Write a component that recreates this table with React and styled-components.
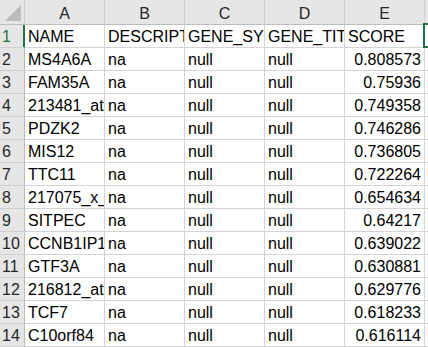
import React from "react";
import styled, { createGlobalStyle } from "styled-components";

const Global = createGlobalStyle`
  html, body { margin: 0; padding: 0; background: #fff; overflow: hidden; }
  body { font-family: "Liberation Sans", Arial, sans-serif; }
`;

const Sheet = styled.div`
  display: grid;
  grid-template-columns: 25px repeat(5, 80px) 1fr;
  grid-auto-rows: 23px;
  grid-template-rows: 25px;
  width: 428px;
  height: 347px;
  overflow: hidden;
  font-family: "Liberation Sans", Arial, sans-serif;
  font-size: 16px;
  line-height: 16px;
`;

const Corner = styled.div`
  background: #e6e6e6;
  border-right: 1px solid #cfcfcf;
  border-bottom: 1px solid #bdbdbd;
  box-sizing: border-box;
  display: flex;
  align-items: flex-end;
  justify-content: flex-end;
  padding: 0 3px 3px 0;
`;

const ColHead = styled.div`
  background: #e6e6e6;
  border-right: 1px solid #cfcfcf;
  border-bottom: 1px solid ${(p) => (p.$active ? "#217346" : "#bdbdbd")};
  box-sizing: border-box;
  display: flex;
  align-items: flex-end;
  justify-content: center;
  padding-bottom: 2px;
  color: #262626;
  font-size: 16px;
`;

const RowHead = styled.div`
  background: #e6e6e6;
  border-right: 1px solid ${(p) => (p.$active ? "#217346" : "#bdbdbd")};
  box-shadow: ${(p) => (p.$active ? "inset -1px 0 0 #217346" : "none")};
  border-bottom: 1px solid #cfcfcf;
  box-sizing: border-box;
  display: flex;
  align-items: flex-end;
  padding: 0 0 2px 2px;
  color: ${(p) => (p.$active ? "#217346" : "#262626")};
  font-size: 16px;
`;

const Cell = styled.div`
  position: relative;
  border-right: 1px solid #d4d4d4;
  border-bottom: 1px solid #d4d4d4;
  box-sizing: border-box;
  display: flex;
  align-items: flex-end;
  justify-content: ${(p) => (p.$num ? "flex-end" : "flex-start")};
  padding: 0 3px 2px 3px;
  color: #000;
  white-space: nowrap;
  overflow: ${(p) => (p.$selected ? "visible" : "hidden")};
`;

const Selection = styled.div`
  position: absolute;
  left: -2px;
  top: -2px;
  width: 40px;
  height: 25px;
  border: 2px solid #217346;
  box-sizing: border-box;
`;

const cols = ["A", "B", "C", "D", "E"];

const rows = [
  ["NAME", "DESCRIPTION", "GENE_SYMBOL", "GENE_TITLE", "SCORE"],
  ["MS4A6A", "na", "null", "null", "0.808573"],
  ["FAM35A", "na", "null", "null", "0.75936"],
  ["213481_at", "na", "null", "null", "0.749358"],
  ["PDZK2", "na", "null", "null", "0.746286"],
  ["MIS12", "na", "null", "null", "0.736805"],
  ["TTC11", "na", "null", "null", "0.722264"],
  ["217075_x_at", "na", "null", "null", "0.654634"],
  ["SITPEC", "na", "null", "null", "0.64217"],
  ["CCNB1IP1", "na", "null", "null", "0.639022"],
  ["GTF3A", "na", "null", "null", "0.630881"],
  ["216812_at", "na", "null", "null", "0.629776"],
  ["TCF7", "na", "null", "null", "0.618233"],
  ["C10orf84", "na", "null", "null", "0.616114"],
];

export default function App() {
  return (
    <>
      <Global />
      <Sheet>
        <Corner>
          <svg width="16" height="16" viewBox="0 0 16 16">
            <polygon points="16,0 16,16 0,16" fill="#bcbcbc" />
          </svg>
        </Corner>
        {cols.map((c) => (
          <ColHead key={c}>{c}</ColHead>
        ))}
        <ColHead $active />
        {rows.map((r, i) => (
          <React.Fragment key={i}>
            <RowHead $active={i === 0}>{i + 1}</RowHead>
            {r.map((v, j) => (
              <Cell key={j} $num={i > 0 && j === 4}>
                {v}
              </Cell>
            ))}
            <Cell $selected={i === 0}>{i === 0 && <Selection />}</Cell>
          </React.Fragment>
        ))}
      </Sheet>
    </>
  );
}
